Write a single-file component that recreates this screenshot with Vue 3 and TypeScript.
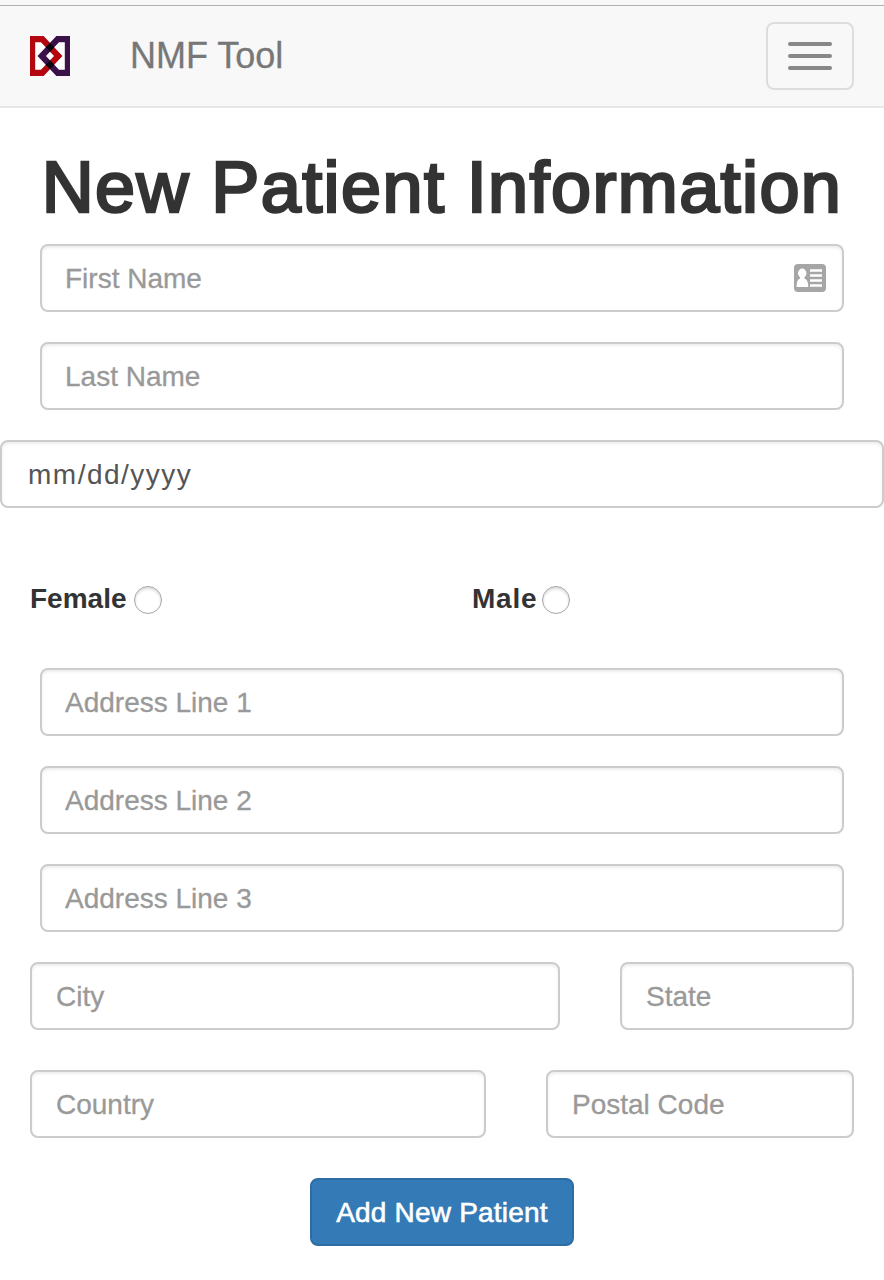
<script setup lang="ts">
import { ref } from 'vue'

interface Field {
  id: string
  label: string
}

const nameFields: Field[] = [
  { id: 'first', label: 'First Name' },
  { id: 'last', label: 'Last Name' },
]
const addressFields: Field[] = [
  { id: 'address1', label: 'Address Line 1' },
  { id: 'address2', label: 'Address Line 2' },
  { id: 'address3', label: 'Address Line 3' },
]
const form = ref<Record<string, string>>({})
const gender = ref('')
</script>

<template>
  <div class="page">
    <nav class="navbar">
      <div class="brand">
        <svg class="logo" width="40" height="40" viewBox="0 0 40 40" aria-hidden="true">
          <rect width="40" height="40" fill="#fff" />
          <path d="M2.1 3.1H12.3L28.2 20 12.3 36.9H2.1Z" fill="none" stroke="#b3060f" stroke-width="6.2" />
          <path d="M37.9 3.1H27.7L11.8 20 27.7 36.9H37.9Z" fill="none" stroke="#3a1249" stroke-width="6.2" />
          <path d="M20 6.900 24.200 11.300 20 15.700 15.800 11.300ZM20 24.300 24.200 28.700 20 33.100 15.800 28.700Z" fill="#090009" />
        </svg>
        <span class="brand-name">NMF Tool</span>
      </div>
      <button class="toggle" type="button" aria-label="Menu">
        <span class="bar" /><span class="bar" /><span class="bar" />
      </button>
    </nav>

    <form class="form" @submit.prevent>
      <h1 class="title"><span class="title-text">New Patient Information</span></h1>

      <div class="stack">
        <div v-for="field in nameFields" :key="field.id" class="field">
          <input v-model="form[field.id]" class="control" type="text" :placeholder="field.label" />
          <svg v-if="field.id === 'first'" class="card-icon" width="32" height="28" viewBox="0 0 32 28" aria-hidden="true">
            <rect width="32" height="28" rx="4" fill="#a6a6a6" />
            <ellipse cx="8.2" cy="9.3" rx="4.2" ry="4.700" fill="#fff" />
            <path d="M6 12h4.400v2.400c2.600 1 3.900 3.500 3.900 8.600H2.600c0-5.100 1-7.600 3.400-8.600Z" fill="#fff" />
            <path d="M16 6.500H28M16 11.500H28M16 16.500H28M16 21.500H28" stroke="#fff" stroke-width="2.700" />
          </svg>
        </div>
      </div>

      <input v-model="form.birth" class="control date" type="text" placeholder="mm/dd/yyyy" />

      <div class="genders">
        <label class="gender"><span>Female</span><input v-model="gender" class="radio female" type="radio" value="female" /></label>
        <label class="gender"><span class="male-text">Male</span><input v-model="gender" class="radio" type="radio" value="male" /></label>
      </div>

      <div class="stack">
        <input v-for="field in addressFields" :key="field.id" v-model="form[field.id]" class="control" type="text" :placeholder="field.label" />
      </div>

      <div class="row city-row">
        <input v-model="form.city" class="control" type="text" placeholder="City" />
        <input v-model="form.state" class="control" type="text" placeholder="State" />
      </div>
      <div class="row country-row">
        <input v-model="form.country" class="control" type="text" placeholder="Country" />
        <input v-model="form.postal" class="control" type="text" placeholder="Postal Code" />
      </div>

      <button class="submit" type="submit">Add New Patient</button>
    </form>
  </div>
</template>

<style>
body {
  margin: 0;
  background: #fff;
}
</style>

<style scoped>
.page,
.page * {
  box-sizing: border-box;
}
.page {
  height: 1280px;
  overflow: hidden;
  font-family: "Liberation Sans", Arial, sans-serif;
  font-size: 28px;
  color: #333;
}
.navbar {
  display: flex;
  justify-content: space-between;
  height: 108px;
  padding: 17px 30px 0;
  background: linear-gradient(#b0b0b0, #b0b0b0) 0 5px / 100% 1px no-repeat #f8f8f8;
  border-bottom: 2px solid #e7e7e7;
}
.brand {
  display: flex;
  padding-top: 19px;
}
.logo {
  display: block;
}
.brand-name {
  margin-left: 60px;
  font-size: 36px;
  line-height: 40px;
  color: #777;
  -webkit-text-stroke: 0.3px #777;
}
.toggle {
  display: flex;
  flex-direction: column;
  align-items: center;
  gap: 8px;
  width: 88px;
  height: 68px;
  margin-top: 5px;
  padding: 18px 0 0;
  background: transparent;
  border: 2px solid #ddd;
  border-radius: 8px;
}
.bar {
  width: 44px;
  height: 4px;
  border-radius: 2px;
  background: #888;
}
.form {
  display: flex;
  flex-direction: column;
}
.title {
  margin: 40px 0 17px;
  height: 79px;
  font-size: 72px;
  line-height: 79px;
  font-weight: 400;
  text-align: center;
  white-space: nowrap;
}
.title-text {
  -webkit-text-stroke: 2.7px #333;
  letter-spacing: 1.4px;
}
.stack {
  display: flex;
  flex-direction: column;
  gap: 30px;
  padding: 0 40px;
}
.field {
  position: relative;
}
.control {
  display: block;
  width: 100%;
  height: 68px;
  margin: 0;
  padding: 14px 23px 12px;
  font: inherit;
  color: #555;
  background: #fff;
  border: 2px solid #ccc;
  border-radius: 8px;
  box-shadow: inset 0 2px 3px rgba(0, 0, 0, 0.075);
}
.control::placeholder {
  color: #999;
  opacity: 1;
  -webkit-text-stroke: 0.3px #999;
}
.card-icon {
  position: absolute;
  top: 20px;
  right: 18px;
}
.date {
  margin-top: 30px;
  padding-left: 26px;
}
.date::placeholder {
  color: #555;
  letter-spacing: 1.5px;
  -webkit-text-stroke: 0;
}
.row .control {
  padding-left: 24px;
}
.genders {
  display: grid;
  grid-template-columns: 1fr 1fr;
  height: 160px;
  padding-top: 74px;
}
.gender {
  display: flex;
  align-items: flex-start;
  padding-left: 30px;
  font-weight: 700;
  line-height: 34px;
}
.male-text {
  letter-spacing: 0.75px;
}
.radio {
  appearance: none;
  width: 28px;
  height: 28px;
  margin: 4px 0 0 5px;
  border: 1px solid #a6a6a6;
  border-radius: 50%;
  background: #fff;
  box-shadow: inset 0 2px 3px rgba(0, 0, 0, 0.15);
}
.female {
  margin-left: 7px;
}
.row {
  display: grid;
  column-gap: 60px;
  padding: 0 30px;
}
.city-row {
  grid-template-columns: 530px 1fr;
  margin-top: 30px;
}
.country-row {
  grid-template-columns: 456px 1fr;
  margin-top: 40px;
}
.submit {
  align-self: center;
  width: 264px;
  height: 68px;
  margin-top: 40px;
  padding: 2px 0 0;
  font: inherit;
  letter-spacing: 0.2px;
  color: #fff;
  -webkit-text-stroke: 0.6px #fff;
  background: #337ab7;
  border: 2px solid #2e6da4;
  border-radius: 8px;
}
</style>
